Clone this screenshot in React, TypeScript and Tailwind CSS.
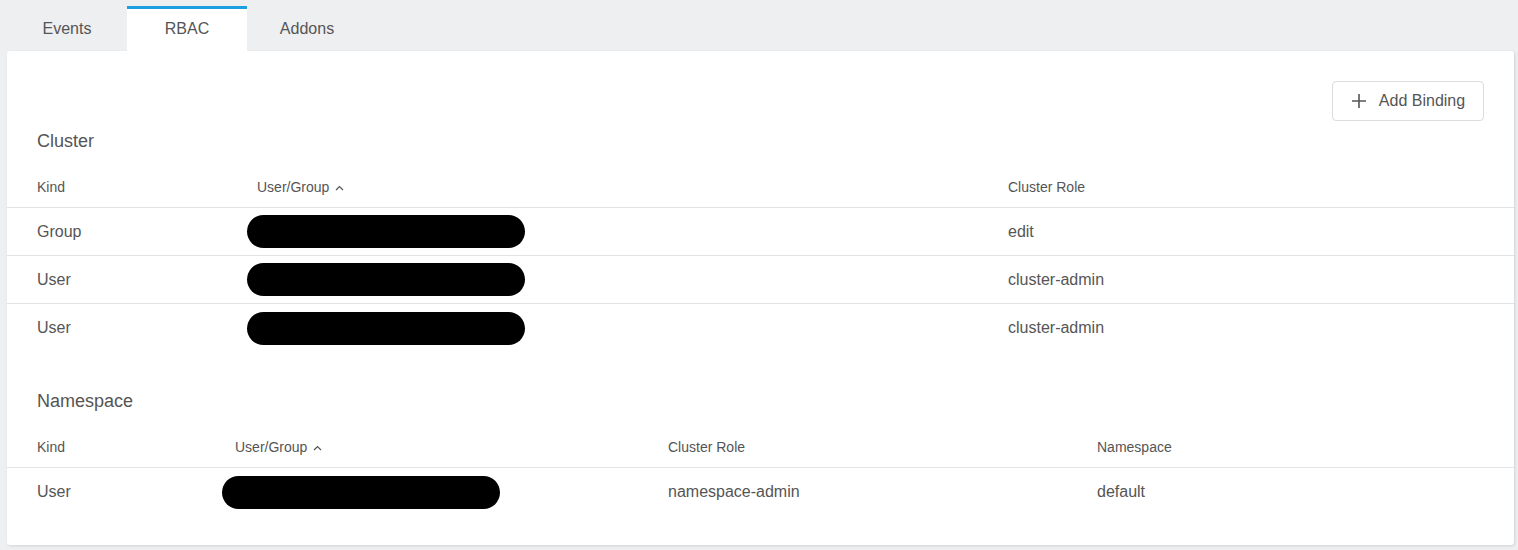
import React from 'react'

const font = { fontFamily: '"Liberation Sans", Arial, sans-serif' }

function SortCaret() {
  return (
    <svg width="9" height="6" viewBox="0 0 9 6" className="ml-1.5 inline-block">
      <path d="M1 5 L4.5 1.5 L8 5" fill="none" stroke="#555" strokeWidth="1.2" />
    </svg>
  )
}

function Pill() {
  return <div className="h-[33px] w-[278px] rounded-full bg-black" />
}

export default function App() {
  const clusterRows = [
    { kind: 'Group', role: 'edit' },
    { kind: 'User', role: 'cluster-admin' },
    { kind: 'User', role: 'cluster-admin' },
  ]

  return (
    <div className="h-[550px] w-[1518px] bg-[#eeeff1] text-[#555] pt-[6px]" style={font}>
      {/* tabs */}
      <div className="flex pl-[7px] h-[45px] text-[16px]">
        <div className="w-[120px] flex items-center justify-center">Events</div>
        <div className="w-[120px] flex items-center justify-center bg-white border-t-[3px] border-[#1b9fe0] pb-[2px]">RBAC</div>
        <div className="w-[120px] flex items-center justify-center">Addons</div>
      </div>

      {/* card */}
      <div className="mx-[7px] w-[1507px] h-[494px] bg-white rounded-[3px] shadow-[1px_1px_3px_rgba(0,0,0,0.12)] pt-[30px]">
        <div className="flex justify-end pr-[30px]">
          <button className="h-[40px] w-[152px] flex items-center justify-center gap-[12px] rounded-[4px] border border-[#dcdcdc] bg-white text-[16px] text-[#555]">
            <svg width="16" height="16" viewBox="0 0 16 16">
              <path d="M8 1 V15 M1 8 H15" stroke="#555" strokeWidth="1.6" />
            </svg>
            Add Binding
          </button>
        </div>

        <div className="mt-[8px] pl-[30px] h-[24px] leading-[24px] text-[18px]">Cluster</div>

        <div className="mt-[15px]">
          <div className="flex items-center h-[40px] border-b border-[#e3e3e3] text-[14px]">
            <div className="w-[240px] pl-[30px]">Kind</div>
            <div className="w-[761px] pl-[10px] flex items-center">User/Group<SortCaret /></div>
            <div className="flex-1">Cluster Role</div>
          </div>
          {clusterRows.map((r, i) => (
            <div
              key={i}
              className={`flex items-center h-[48px] text-[16px] ${i < clusterRows.length - 1 ? 'border-b border-[#e3e3e3]' : ''}`}
            >
              <div className="w-[240px] pl-[30px]">{r.kind}</div>
              <div className="w-[761px]"><Pill /></div>
              <div className="flex-1">{r.role}</div>
            </div>
          ))}
        </div>

        <div className="mt-[37px] pl-[30px] h-[24px] leading-[24px] text-[18px]">Namespace</div>

        <div className="mt-[15px]">
          <div className="flex items-center h-[40px] border-b border-[#e3e3e3] text-[14px]">
            <div className="w-[215px] pl-[30px]">Kind</div>
            <div className="w-[446px] pl-[13px] flex items-center">User/Group<SortCaret /></div>
            <div className="w-[429px]">Cluster Role</div>
            <div className="flex-1">Namespace</div>
          </div>
          <div className="flex items-center h-[48px] text-[16px]">
            <div className="w-[215px] pl-[30px]">User</div>
            <div className="w-[446px]"><Pill /></div>
            <div className="w-[429px]">namespace-admin</div>
            <div className="flex-1">default</div>
          </div>
        </div>
      </div>
    </div>
  )
}
